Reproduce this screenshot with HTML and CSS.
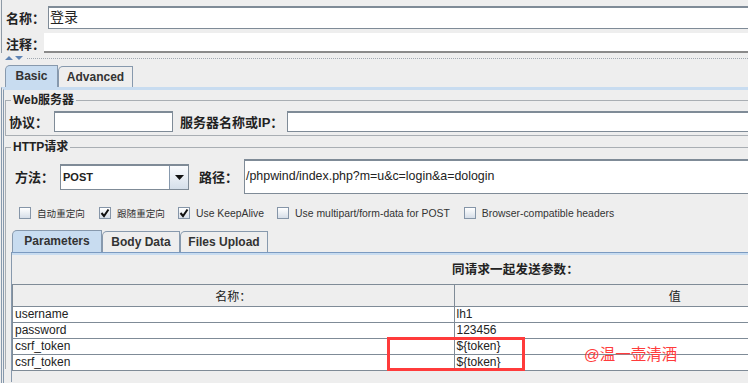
FILE: index.html
```html
<!DOCTYPE html>
<html lang="zh-CN">
<head>
    <meta charset="UTF-8">
    <title>HTTP请求</title>
    <link rel="stylesheet" href="styles.css">
</head>
<body>
    <div id="page">
        <div class="top">
            <div class="row name-row">
                <span class="lbl name-lbl">名称：</span>
                <div class="field">登录</div>
            </div>
            <div class="row comment-row">
                <span class="lbl comment-lbl">注释：</span>
                <div class="field blank"></div>
            </div>
        </div>
        <div class="splitter">
            <span class="tri up"></span>
            <span class="tri down"></span>
            <span class="dots"></span>
        </div>
        <div class="tabs outer">
            <div class="tab active">Basic</div>
            <div class="tab">Advanced</div>
        </div>
        <div class="panel">
            <fieldset class="group web">
                <legend>Web服务器</legend>
                <div class="line">
                    <span class="lbl">协议：</span>
                    <div class="box proto"></div>
                    <span class="lbl server-lbl">服务器名称或IP：</span>
                    <div class="box grow"></div>
                </div>
            </fieldset>
            <fieldset class="group http">
                <legend>HTTP请求</legend>
                <div class="line method-line">
                    <span class="lbl method-lbl">方法：</span>
                    <div class="combo">
                        <div class="combo-text">POST</div>
                        <div class="combo-btn">
                            <svg width="9" height="5" viewBox="0 0 9 5"><polygon points="0,0 9,0 4.5,5" fill="#111"/></svg>
                        </div>
                    </div>
                    <span class="lbl path-lbl">路径：</span>
                    <div class="box path">/phpwind/index.php?m=u&amp;c=login&amp;a=dologin</div>
                </div>
                <div class="checks">
                    <div class="check"><span class="cb"></span><span class="cjk">自动重定向</span></div>
                    <div class="check"><span class="cb on"><svg width="10" height="10" viewBox="0 0 10 10"><polyline points="1.5,5 4,8 8.5,1.5" fill="none" stroke="#111" stroke-width="2"/></svg></span><span class="cjk">跟随重定向</span></div>
                    <div class="check"><span class="cb on"><svg width="10" height="10" viewBox="0 0 10 10"><polyline points="1.5,5 4,8 8.5,1.5" fill="none" stroke="#111" stroke-width="2"/></svg></span><span>Use KeepAlive</span></div>
                    <div class="check"><span class="cb"></span><span>Use multipart/form-data for POST</span></div>
                    <div class="check"><span class="cb"></span><span>Browser-compatible headers</span></div>
                </div>
                <div class="tabs inner">
                    <div class="tab active params">Parameters</div>
                    <div class="tab body-tab">Body Data</div>
                    <div class="tab files-tab">Files Upload</div>
                </div>
                <div class="subpanel">
                    <div class="caption">同请求一起发送参数：</div>
                    <table class="params-table">
                        <thead>
                            <tr><th>名称：</th><th>值</th></tr>
                        </thead>
                        <tbody>
                            <tr><td>username</td><td>lh1</td></tr>
                            <tr><td>password</td><td>123456</td></tr>
                            <tr><td>csrf_token</td><td>${token}</td></tr>
                            <tr><td>csrf_token</td><td>${token}</td></tr>
                        </tbody>
                    </table>
                </div>
            </fieldset>
        </div>
        <div class="mark"></div>
        <div class="watermark">@温一壶清酒</div>
    </div>
</body>
</html>
```

FILE: styles.css
```css
html, body {
    margin: 0;
    padding: 0;
}
body {
    width: 748px;
    height: 383px;
    overflow: hidden;
    background-color: #eeeeee;
    font-family: "Liberation Sans", "Noto Sans CJK SC", sans-serif;
    font-size: 12px;
    color: #222;
}
#page {
    position: relative;
    width: 748px;
    height: 383px;
    overflow: hidden;
}
.top {
    margin-left: 1px;
    border-left: 1px solid #8e9aa6;
    height: 53px;
}
.row {
    display: flex;
    align-items: center;
}
.name-row {
    padding-top: 6px;
    height: 23px;
}
.comment-row {
    margin-top: 4px;
    height: 20px;
}
.lbl {
    font-weight: bold;
    font-size: 13px;
    white-space: nowrap;
    color: #222;
}
.name-lbl {
    width: 42px;
    padding-left: 4px;
}
.comment-lbl {
    width: 38px;
    padding-left: 4px;
}
.field {
    flex: 1;
    height: 100%;
    box-sizing: border-box;
    background-color: white;
    border: 1px solid #7f8b97;
    border-top: 2px solid #7f8b97;
    border-right: none;
    font-size: 14px;
    line-height: 19px;
    padding-left: 1px;
}
.field.blank {
    border: none;
    border-bottom: 2px solid #8a8a8a;
}
.splitter {
    display: flex;
    align-items: center;
    height: 10px;
    padding-left: 5px;
    gap: 2px;
}
.tri {
    width: 0;
    height: 0;
    border-left: 4px solid transparent;
    border-right: 4px solid transparent;
}
.tri.up {
    border-bottom: 4px solid #5f83b3;
}
.tri.down {
    border-top: 4px solid #5f83b3;
}
.dots {
    flex: 1;
    height: 0;
    border-top: 1px dotted #a0a8b0;
    margin-left: 2px;
    margin-top: 1px;
}
.tabs {
    display: flex;
    align-items: flex-end;
}
.tabs.outer {
    margin-top: 3px;
    padding-left: 5px;
    height: 21px;
}
.tab {
    box-sizing: border-box;
    height: 21px;
    border: 1px solid #8799ad;
    border-bottom: none;
    border-top-left-radius: 5px;
    font-weight: bold;
    font-size: 12px;
    line-height: 20px;
    text-align: center;
    color: #333;
    background-color: #eeeeee;
}
.tab.active {
    background-color: #c8dcf0;
    height: 22px;
}
.tabs.outer .tab {
    width: 53px;
}
.tabs.outer .tab + .tab {
    width: 75px;
}
.panel {
    margin-left: 1px;
    border-left: 3px double #8799ad;
    border-top: 3px solid #c8dcf0;
    padding-left: 1px;
    padding-top: 3px;
    height: 290px;
}
.group {
    margin: 0;
    padding: 0;
    border: 1px solid #a9aeb3;
    border-right: none;
    min-width: 0;
}
.group legend {
    margin-left: 5px;
    padding: 0 2px;
    font-weight: bold;
    font-size: 12px;
    line-height: 14px;
    color: #222;
}
.line {
    display: flex;
    align-items: center;
    padding-left: 3px;
}
.web .line {
    padding-top: 4px;
    padding-bottom: 3px;
    height: 21px;
}
.box {
    box-sizing: border-box;
    height: 21px;
    background-color: white;
    border: 1px solid #7f8b97;
    border-top: 2px solid #7f8b97;
}
.proto {
    width: 119px;
    margin-left: 6px;
}
.server-lbl {
    margin-left: 7px;
}
.grow {
    flex: 1;
    margin-left: 4px;
    border-right: none;
}
.http {
    margin-top: 4px;
    height: 228px;
    border-bottom: none;
}
.method-line {
    padding-top: 5px;
    height: 35px;
}
.method-lbl {
    margin-left: 6px;
}
.combo {
    display: flex;
    margin-left: 6px;
    width: 129px;
    height: 26px;
    box-sizing: border-box;
    border: 1px solid #7f8b97;
    border-top: 2px solid #7f8b97;
}
.combo-text {
    flex: 1;
    background-color: white;
    font-weight: bold;
    font-size: 11px;
    line-height: 22px;
    padding-left: 2px;
}
.combo-btn {
    width: 18px;
    display: flex;
    justify-content: center;
    align-items: center;
    border-left: 1px solid #8799ad;
    background: linear-gradient(#fbfcfe, #d5dfea);
}
.path-lbl {
    margin-left: 10px;
}
.path {
    flex: 1;
    height: 35px;
    margin-left: 6px;
    font-size: 12.4px;
    line-height: 31px;
    padding-left: 1px;
    color: #222;
    border-right: none;
}
.checks {
    display: flex;
    align-items: center;
    margin-top: 13px;
    margin-left: 13px;
    height: 12px;
    font-size: 10.4px;
    color: #333;
}
.check {
    display: flex;
    align-items: center;
    white-space: nowrap;
}
.check:nth-child(2) {
    margin-left: 14px;
}
.check:nth-child(3) {
    margin-left: 13px;
}
.check:nth-child(4) {
    margin-left: 13px;
}
.check:nth-child(5) {
    margin-left: 14px;
}
.cjk {
    font-size: 9.6px;
}
.cb {
    box-sizing: border-box;
    width: 12px;
    height: 12px;
    margin-right: 6px;
    border: 1px solid #8595a8;
    background: linear-gradient(#ffffff, #d6dee8);
    display: flex;
    justify-content: center;
    align-items: center;
}
.tabs.inner {
    margin-top: 11px;
    margin-left: 6px;
    height: 22px;
}
.params {
    width: 90px;
}
.body-tab {
    width: 78px;
}
.files-tab {
    width: 88px;
}
.subpanel {
    margin-left: 5px;
    border-left: 1px solid #8799ad;
    border-top: 1px solid #7b9ac0;
    box-shadow: inset 0 2px 0 #c8dcf0;
    padding-top: 9px;
    height: 120px;
}
.caption {
    font-weight: bold;
    font-size: 12.5px;
    line-height: 16px;
    padding-left: 440px;
    letter-spacing: 0.2px;
    color: #222;
}
.params-table {
    margin-top: 6px;
    width: 884px;
    border-collapse: collapse;
    font-size: 12px;
}
.params-table th {
    height: 21px;
    padding: 0;
    font-weight: normal;
    background-color: #eeeeee;
    border: 1px solid #7f8b97;
    text-align: center;
    color: #222;
    width: 50%;
}
.params-table td {
    height: 15px;
    padding: 0 2px;
    line-height: 15px;
    background-color: white;
    border: 1px solid #7f8b97;
    border-top: none;
    color: #222;
}
.mark {
    position: absolute;
    left: 387px;
    top: 337px;
    width: 138px;
    height: 34px;
    box-sizing: border-box;
    border: 3px solid #ff3b3b;
}
.watermark {
    position: absolute;
    left: 584px;
    top: 346px;
    font-size: 15.5px;
    line-height: 18px;
    color: #ff3b3b;
}
```
